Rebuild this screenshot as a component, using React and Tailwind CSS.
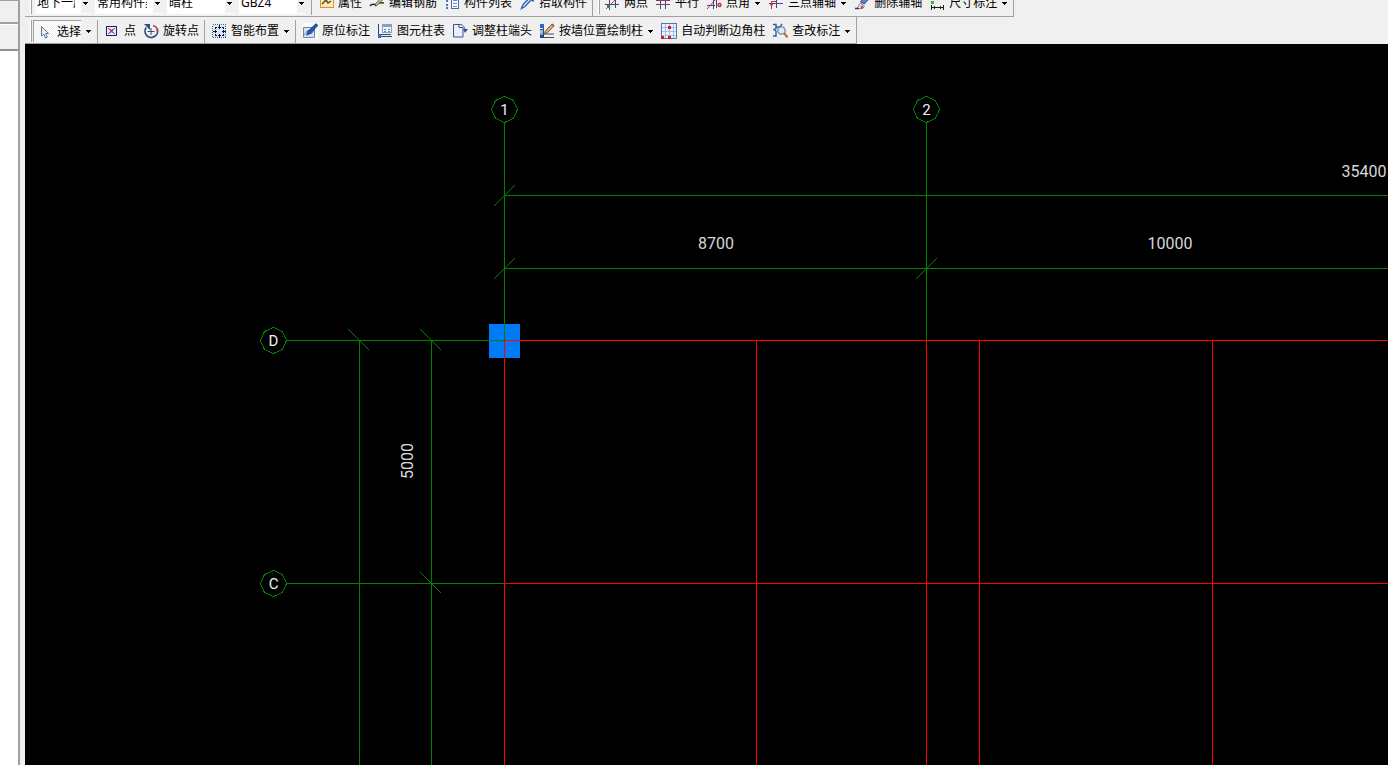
import React, { useState } from 'react';

/* ---------- toolbar icons, all on a 16px grid ---------- */

function Icon({ children, crisp }) {
  return (
    <svg
      className="w-4 h-4 shrink-0"
      viewBox="0 0 16 16"
      fill="none"
      shapeRendering={crisp ? 'crispEdges' : 'auto'}
      aria-hidden="true"
    >
      {children}
    </svg>
  );
}

const icons = {
  cursor: (
    <Icon>
      <path d="M4.5 2.5v9.5l2.3-2 1.7 4 1.8-.8-1.7-3.7h3z" fill="#eef4fa" stroke="#5d7389" />
    </Icon>
  ),
  point: (
    <Icon>
      <rect x="2.5" y="3.5" width="10" height="9" fill="#e6eaf8" stroke="#22226a" shapeRendering="crispEdges" />
      <path d="M4 5l7 6M11 5l-7 6" stroke="#4a58a8" />
      <path d="M6 6.500l3 3M9 6.500l-3 3" stroke="#e0203a" strokeWidth="1.400" />
    </Icon>
  ),
  rotate: (
    <Icon>
      <path d="M3.2 4.500a6.300 6.300 0 1 0 10.800 1" stroke="#34507c" strokeWidth="1.800" />
      <path d="M1 1h6v6z" fill="#34507c" />
      <path d="M10 2.500a6 6 0 0 1 4.500 6" stroke="#c8404c" strokeWidth="1.700" />
      <path d="M8 5v7M4.500 8.500h7" stroke="#34507c" />
    </Icon>
  ),
  smart: (
    <Icon crisp>
      <rect x="1.5" y="1.5" width="13" height="13" fill="#d9e8f6" stroke="#3d6390" strokeDasharray="1 1" />
      <path d="M8.500 2v4M8.500 11v4M2 8.500h4M11 8.500h4" stroke="#10182c" />
      <path d="M7 4.500h3M7 12.500h3M4.500 7v3M12.500 7v3" stroke="#10182c" />
      <path d="M4 4h2v1H5v1H4zM11 4h2v2h-1V5h-1zM4 11h1v1h1v1H4zM12 11h1v2h-2v-1h1z" fill="#10182c" />
    </Icon>
  ),
  annotate: (
    <Icon>
      <rect x="0" y="0" width="16" height="16" fill="#f9fbfe" />
      <path d="M1.5 4.5h11v10h-11z" fill="#d5e2f2" stroke="#6784ad" />
      <path d="M2 12l4-5 3 4 3-3" stroke="#6d93c8" />
      <path d="M14 1l1.5 1.5-7.500 8-3 1.200 1-3z" fill="#2467bd" stroke="#164b94" strokeWidth="1.200" />
    </Icon>
  ),
  columnTable: (
    <Icon crisp>
      <path d="M1.5 1v13M1 13.5h14M4 11.5h10" stroke="#28468c" />
      <rect x="1" y="11" width="3" height="4" fill="#4368b4" />
      <rect x="5.5" y="1.5" width="9" height="8" fill="#eef4fc" stroke="#8c9fbd" />
      <path d="M6 3h8" stroke="#7c9fd5" strokeWidth="2" />
      <path d="M7 6h2M11 6h2M7 8h2M11 8h2" stroke="#6888bc" />
    </Icon>
  ),
  columnEnd: (
    <Icon>
      <path d="M1.5 1.5H7v3h4v9.500H1.5z" fill="#e9f0fb" stroke="#34509a" />
      <path d="M7 1.500c3-.5 5.500 2 6 5" stroke="#34509a" />
      <path d="M11 6h5l-3 4z" fill="#34509a" />
    </Icon>
  ),
  wallColumn: (
    <Icon>
      <path d="M4.5 1v14M1 6.5h4M1 11h14M4 14.5h11" stroke="#3f4a68" />
      <rect x="1" y="1" width="4" height="4" fill="#3168c8" />
      <rect x="1" y="7" width="3" height="3" fill="#9dbdf0" />
      <rect x="1" y="12" width="4" height="3" fill="#1f4898" />
      <path d="M13 1l2 2-7 7-2.600.8.800-2.600z" fill="#d8b066" stroke="#63472a" strokeWidth=".8" />
      <path d="M13 1l2 2" stroke="#b7413e" strokeWidth="1.600" />
    </Icon>
  ),
  edgeColumn: (
    <Icon crisp>
      <rect x=".5" y=".5" width="15" height="15" fill="#edf4fd" stroke="#4f78b4" />
      <path d="M4.5 1v14M8.500 1v14M12.500 1v14M1 4.500h14M1 8.500h14M1 12.500h14" stroke="#a3bfe8" />
      <rect x="7" y="3" width="3" height="3" fill="#dc1420" />
      <rect x="0" y="13" width="3" height="3" fill="#dc1420" />
      <rect x="7" y="13" width="3" height="3" fill="#dc1420" />
    </Icon>
  ),
  review: (
    <Icon>
      <path d="M1 1.500h3v4l-2 1 2 1.500v5H1M4 4h4l2-3" stroke="#2b5fa6" strokeWidth="1.400" />
      <circle cx="9.500" cy="7.500" r="3.700" fill="#dceaf5" stroke="#75869a" strokeWidth="1.300" />
      <path d="M12 10l3.500 4.500" stroke="#a9773a" strokeWidth="2.200" />
    </Icon>
  ),
  property: (
    <Icon>
      <rect x="2.500" y="2.500" width="13" height="10" fill="#fdeab4" stroke="#dd9a3c" />
      <path d="M4 9l4-4 2 3 3-2" stroke="#5b4b36" strokeWidth="1.500" />
      <path d="M2 12.500h14" stroke="#e28d2c" />
    </Icon>
  ),
  editRebar: (
    <Icon>
      <path d="M1 11c3-4 4 0 7-2s4-1 7-1" stroke="#20242a" strokeWidth="1.400" />
      <path d="M12 3l2 1.500-6 6-2 .5.500-2z" fill="#d9c28c" stroke="#463c2c" strokeWidth=".8" />
    </Icon>
  ),
  list: (
    <Icon crisp>
      <path d="M2 5.500h2M2 9.500h2M2 12.500h2" stroke="#5074b4" strokeWidth="2" />
      <rect x="7.500" y="2.500" width="7" height="11" fill="#f5f9ff" stroke="#4f6ca0" />
      <path d="M9 5.500h4M9 8.500h4M9 11.500h4" stroke="#6c8cc2" />
    </Icon>
  ),
  pick: (
    <Icon>
      <path d="M10.500 2.500l4 4M12 5L6 11.500l-3.500 2 1.500-4L10 3.500z" fill="#cfe3f9" stroke="#2a62b2" strokeWidth="1.300" />
      <path d="M11 1.500l3.500 4" stroke="#1b488e" strokeWidth="2.500" />
    </Icon>
  ),
  twoPoint: (
    <Icon>
      <path d="M5.500 1v14M11.500 1v12M1 9.500h14" stroke="#3a4a80" />
      <path d="M2 14L13 3" stroke="#b83a48" />
      <rect x="3" y="10" width="3" height="3" fill="#338a3a" />
    </Icon>
  ),
  parallel: (
    <Icon crisp>
      <path d="M5.500 1v13M10.500 1v13" stroke="#3a4a80" />
      <path d="M1 5.500h14M1 9.500h14" stroke="#803a64" />
    </Icon>
  ),
  pointAngle: (
    <Icon>
      <path d="M7.500 1v13M1 10.500h8" stroke="#3a4a80" />
      <path d="M1 14L11 3" stroke="#c03040" />
      <path d="M10.500 4v9" stroke="#3a4a80" />
      <circle cx="13.500" cy="10" r="1.500" stroke="#d02434" strokeWidth="1.400" />
    </Icon>
  ),
  threePoint: (
    <Icon>
      <path d="M1 8.500h14M8.500 3v10" stroke="#3a4a80" />
      <path d="M3.500 14V6.500h5" stroke="#c03040" />
      <circle cx="3.500" cy="9" r="1.500" fill="#c03040" />
    </Icon>
  ),
  deleteAxis: (
    <Icon>
      <path d="M10 2l4-2 1.500 3-5 6-4-2z" fill="#5c82c8" stroke="#23396f" strokeWidth=".8" />
      <path d="M6.500 8l4 3-2 2.500H3z" fill="#f2e9f2" stroke="#7c5d84" strokeWidth=".8" />
      <path d="M1 13.500h4" stroke="#2c3f72" strokeWidth="1.500" />
      <path d="M7 11l2 2" stroke="#c43a50" strokeWidth="2" />
    </Icon>
  ),
  dimension: (
    <Icon crisp>
      <rect x="2" y="6" width="3" height="3" fill="#3fae4a" />
      <path d="M2.500 10v5M14.500 10v5M3 12.500h12M5.500 11v3M11.500 11v3" stroke="#1e1e1e" />
    </Icon>
  ),
};

function Caret() {
  return (
    <svg className="w-[6px] h-[3px] shrink-0" viewBox="0 0 6 3" shapeRendering="crispEdges" aria-hidden="true">
      <path d="M0 0h5v1H0zM1 1h3v1H1zM2 2h1v1H2z" fill="#000" />
    </svg>
  );
}

function ToolButton({ icon, label, menu, active }) {
  if (active) {
    return (
      <button className="flex items-center gap-[5px] h-full pr-[3px]">
        <span className="flex items-center gap-1 h-[22px] pl-[3px] border-l border-t border-[#a0a0a0] bg-[repeating-conic-gradient(#ffffff_0%_25%,#f0f0f0_0%_50%)] bg-size-[2px_2px]">
          {icons[icon]}
          {label}
        </span>
        <Caret />
      </button>
    );
  }
  return (
    <button className="flex items-center gap-[5px] h-full px-[3px] hover:bg-[#e1eaf5]">
      <span className="flex items-center gap-1">
        {icons[icon]}
        {label}
      </span>
      {menu && <Caret />}
    </button>
  );
}

function Combo({ label, options, className }) {
  const [value, setValue] = useState(options[0]);
  return (
    <div className={`relative flex h-[22px] bg-white ${className}`}>
      <select
        aria-label={label}
        value={value}
        onChange={e => setValue(e.target.value)}
        className="w-full h-full appearance-none bg-transparent pl-[2px] pr-[15px] overflow-hidden outline-none"
      >
        {options.map(o => <option key={o}>{o}</option>)}
      </select>
      <span className="absolute right-0 inset-y-0 w-[9px] flex items-center justify-center bg-[#f0f0f0] pointer-events-none border-y border-white">
        <Caret />
      </span>
    </div>
  );
}

function Separator() {
  return <span className="w-px h-[23px] ml-px mr-[2px] bg-[#a0a0a0]" />;
}

function Toolbar({ label, className = '', children }) {
  return (
    <div
      role="toolbar"
      aria-label={label}
      className={`flex items-center gap-px h-[27px] pl-[5px] pr-[2px] border-r border-b border-[#a0a0a0] whitespace-nowrap ${className}`}
    >
      <span className="w-[2px] h-[22px] border-l border-l-white bg-[#a0a0a0]" />
      {children}
    </div>
  );
}

/* ---------- drawing ---------- */

const GREEN = '#008000';
const RED = '#ff0000';

const bubbles = [
  { id: '1', x: 479.5, y: 65.5 },
  { id: '2', x: 901.5, y: 65.5 },
  { id: 'D', x: 248.5, y: 296.5 },
  { id: 'C', x: 248.5, y: 539.5 },
];

// [x1, y1, x2, y2]; '100%' runs to the edge of the view
const axisLines = [
  [479.5, 78, 479.5, 296],
  [901.5, 78, 901.5, 296],
  [479, 151.5, '100%', 151.5],
  [479, 224.5, '100%', 224.5],
  [261, 296.5, 480, 296.5],
  [261, 539.5, 480, 539.5],
  [334.5, 297, 334.5, '100%'],
  [406.5, 297, 406.5, '100%'],
];

const beamLines = [
  [480, 296.5, '100%', 296.5],
  [480, 539.5, '100%', 539.5],
  [479.5, 296, 479.5, '100%'],
  [731.5, 296, 731.5, '100%'],
  [901.5, 296, 901.5, '100%'],
  [954.5, 296, 954.5, '100%'],
  [1187.5, 296, 1187.5, '100%'],
];

const risingTicks = [[479.5, 151.5], [479.5, 224.5], [901.5, 224.5]];
const fallingTicks = [[334.5, 296.5], [406.5, 296.5], [406.5, 539.5]];

const dims = [
  { text: '35400', x: 1339, y: 133 },
  { text: '8700', x: 691, y: 205 },
  { text: '10000', x: 1145, y: 205 },
];

function Lines({ items, color }) {
  return (
    <g stroke={color}>
      {items.map(([x1, y1, x2, y2]) => (
        <line key={`${x1}-${y1}-${x2}-${y2}`} x1={x1} y1={y1} x2={x2} y2={y2} />
      ))}
    </g>
  );
}

function Drawing() {
  return (
    <svg className="block w-full h-full bg-black" shapeRendering="crispEdges" role="img" aria-label="轴网">
      <rect x="464" y="280" width="31" height="34" fill="#007af5" />
      <Lines items={axisLines} color={GREEN} />
      <Lines items={beamLines} color={RED} />
      <g stroke={GREEN}>
        {risingTicks.map(([x, y]) => (
          <path key={`${x}-${y}`} d={`M${x - 11} ${y + 11}L${x + 10} ${y - 10}`} />
        ))}
        {fallingTicks.map(([x, y]) => (
          <path key={`${x}-${y}`} d={`M${x - 11} ${y - 11}L${x + 10} ${y + 10}`} />
        ))}
      </g>
      {bubbles.map(b => (
        <g key={b.id} transform={`translate(${b.x} ${b.y})`}>
          <path d="M0-13L9-9L13 0L9 9L0 13L-9 9L-13 0L-9-9Z" fill="none" stroke={GREEN} />
          <text y="5" textAnchor="middle" className="text-[15px] fill-[#f0f0f0] font-[Roboto,sans-serif]">{b.id}</text>
        </g>
      ))}
      <g textAnchor="middle" className="text-[16px] fill-[#d8d8d8] font-[Roboto,sans-serif]">
        {dims.map(d => <text key={d.text} x={d.x} y={d.y}>{d.text}</text>)}
        <text transform="translate(388 417) rotate(-90)">5000</text>
      </g>
    </svg>
  );
}

export default function App() {
  return (
    <div className="flex h-screen overflow-hidden bg-[#f0f0f0] text-black text-[12px] leading-4 font-['Noto_Sans','Noto_Sans_CJK_SC',sans-serif]">
      {/* docked panel edge */}
      <aside className="w-[20px] shrink-0 flex flex-col border-r-2 border-[#a0a0a0]">
        <div className="h-6 border-t border-b-2 border-[#a0a0a0]" />
        <div className="h-[27px] border-t border-t-white border-b-2 border-b-[#8c929c]" />
        <div className="flex-1 bg-white" />
      </aside>
      <div className="w-[5px] shrink-0 bg-[#f0f0f0]" />

      <main className="flex-1 min-w-0 flex flex-col">
        {/* upper toolbar row is scrolled partly out of view */}
        <div className="flex items-end h-[17px] shrink-0 overflow-hidden">
          <Toolbar label="构件">
            <div className="flex gap-[5px] ml-[2px] mr-[3px]">
              <Combo label="楼层" options={['地下一层', '首层']} className="w-[55px]" />
              <Combo label="构件类型" options={['常用构件类型', '柱']} className="w-[67px]" />
              <Combo label="构件" options={['暗柱', '框架柱']} className="w-[67px]" />
              <Combo label="名称" options={['GBZ4', 'GBZ5']} className="w-[67px]" />
            </div>
            <Separator />
            <ToolButton icon="property" label="属性" />
            <ToolButton icon="editRebar" label="编辑钢筋" />
            <ToolButton icon="list" label="构件列表" />
            <ToolButton icon="pick" label="拾取构件" />
          </Toolbar>
          <Toolbar label="辅轴">
            <ToolButton icon="twoPoint" label="两点" />
            <ToolButton icon="parallel" label="平行" />
            <ToolButton icon="pointAngle" label="点角" menu />
            <ToolButton icon="threePoint" label="三点辅轴" menu />
            <ToolButton icon="deleteAxis" label="删除辅轴" />
            <ToolButton icon="dimension" label="尺寸标注" menu />
          </Toolbar>
        </div>

        <div className="flex h-[27px] shrink-0">
          <Toolbar label="绘图" className="pt-[2px]">
            <ToolButton icon="cursor" label="选择" active />
            <Separator />
            <ToolButton icon="point" label="点" />
            <ToolButton icon="rotate" label="旋转点" />
            <Separator />
            <ToolButton icon="smart" label="智能布置" menu />
            <Separator />
            <ToolButton icon="annotate" label="原位标注" />
            <ToolButton icon="columnTable" label="图元柱表" />
            <ToolButton icon="columnEnd" label="调整柱端头" />
            <ToolButton icon="wallColumn" label="按墙位置绘制柱" menu />
            <ToolButton icon="edgeColumn" label="自动判断边角柱" />
            <ToolButton icon="review" label="查改标注" menu />
          </Toolbar>
        </div>

        <div className="flex-1 min-h-0 bg-black">
          <Drawing />
        </div>
      </main>
    </div>
  );
}
